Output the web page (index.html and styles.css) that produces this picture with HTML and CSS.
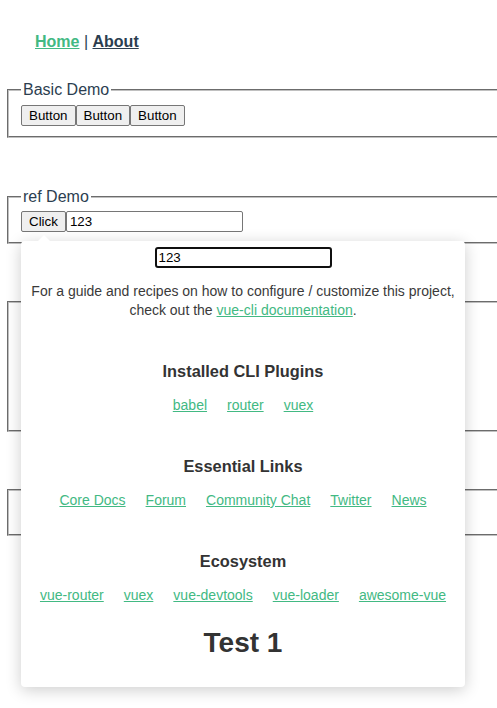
FILE: index.html
```html
<!DOCTYPE html>
<html lang="en">
<head>
<meta charset="utf-8">
<title>Demo</title>
<link rel="stylesheet" href="styles.css">
</head>
<body>
<div class="app">
  <nav class="nav"><a class="nav-link active" href="#">Home</a> | <a class="nav-link" href="#">About</a></nav>

  <fieldset class="box box-basic">
    <legend class="box-title">Basic Demo</legend>
    <div class="row"><button class="btn">Button</button><button class="btn">Button</button><button class="btn">Button</button></div>
  </fieldset>

  <fieldset class="box box-ref">
    <legend class="box-title">ref Demo</legend>
    <div class="row"><button class="btn">Click</button><input class="field" type="text" value="123"></div>
  </fieldset>

  <fieldset class="box box-third">
    <div class="filler-tall"></div>
  </fieldset>

  <fieldset class="box box-fourth">
    <div class="filler-short"></div>
  </fieldset>

  <div class="popover">
    <span class="popover-arrow"></span>
    <div class="pop-input-wrap"><input class="field field-focus" type="text" value="123"></div>
    <p class="intro">For a guide and recipes on how to configure / customize this project,<br>check out the <a class="link" href="#">vue-cli documentation</a>.</p>
    <h3 class="section-title">Installed CLI Plugins</h3>
    <ul class="links">
      <li><a class="link" href="#">babel</a></li>
      <li><a class="link" href="#">router</a></li>
      <li><a class="link" href="#">vuex</a></li>
    </ul>
    <h3 class="section-title">Essential Links</h3>
    <ul class="links">
      <li><a class="link" href="#">Core Docs</a></li>
      <li><a class="link" href="#">Forum</a></li>
      <li><a class="link" href="#">Community Chat</a></li>
      <li><a class="link" href="#">Twitter</a></li>
      <li><a class="link" href="#">News</a></li>
    </ul>
    <h3 class="section-title">Ecosystem</h3>
    <ul class="links">
      <li><a class="link" href="#">vue-router</a></li>
      <li><a class="link" href="#">vuex</a></li>
      <li><a class="link" href="#">vue-devtools</a></li>
      <li><a class="link" href="#">vue-loader</a></li>
      <li><a class="link" href="#">awesome-vue</a></li>
    </ul>
    <h1 class="big-title">Test 1</h1>
  </div>
</div>
</body>
</html>
```
FILE: styles.css
```css
html, body {
  margin: 0;
  padding: 0;
  background: #ffffff;
  overflow: hidden;
}

.app {
  position: relative;
  width: 497px;
  height: 708px;
  overflow: hidden;
  font-family: "Liberation Sans", Arial, Helvetica, sans-serif;
  color: #2c3e50;
  font-size: 16px;
}

.nav {
  padding: 33px 0 30px 35px;
  line-height: 18px;
  font-size: 16px;
}

.nav-link {
  font-weight: bold;
  color: #2c3e50;
  text-decoration: underline;
}

.nav-link.active {
  color: #42b983;
}

.box {
  width: 600px;
  margin: 0 0 0 7px;
  padding: 5.6px 12px 10px;
  border: 2px groove rgb(192, 192, 192);
  min-width: 0;
}

.box-title {
  padding: 0 2px;
  line-height: 18px;
  font-size: 16px;
}

.box-ref {
  margin-top: 50px;
}

.box-third {
  margin-top: 57px;
}

.box-fourth {
  margin-top: 57px;
}

.filler-tall {
  height: 111px;
}

.filler-short {
  height: 28px;
}

.row {
  display: flex;
  align-items: flex-start;
}

.btn {
  box-sizing: border-box;
  height: 21px;
  margin: 0;
  padding: 1px 7px;
  font-family: "Liberation Sans", Arial, sans-serif;
  font-size: 13.333px;
  color: #000000;
  background: #efefef;
  border: 1px solid #767676;
  border-radius: 2px;
}

.field {
  box-sizing: border-box;
  width: 177px;
  height: 21px;
  margin: 0;
  padding: 1px 3px;
  font-family: "Liberation Sans", Arial, sans-serif;
  font-size: 13.333px;
  color: #000000;
  background: #ffffff;
  border: 1px solid #767676;
  border-radius: 2px;
}

.field-focus {
  border: 2px solid #101010;
  border-radius: 3px;
  padding: 0 2px;
}

.popover {
  position: absolute;
  left: 21px;
  top: 241px;
  width: 444px;
  box-sizing: border-box;
  padding: 6px 0 28px;
  background: #ffffff;
  border-radius: 4px;
  box-shadow: 0 3px 16px rgba(0, 0, 0, 0.2);
  text-align: center;
  color: #333333;
  font-size: 14px;
}

.popover-arrow {
  position: absolute;
  top: -6px;
  left: 17px;
  width: 0;
  height: 0;
  border-left: 6px solid transparent;
  border-right: 6px solid transparent;
  border-bottom: 6px solid #ffffff;
}

.pop-input-wrap {
  display: flex;
  justify-content: center;
}

.intro {
  margin: 14px 0 0;
  line-height: 19px;
  color: #3a3a3a;
}

.link {
  color: #42b983;
  text-decoration: underline;
}

.section-title {
  margin: 41px 0 0;
  font-size: 16.38px;
  line-height: 20px;
  font-weight: bold;
}

.links {
  list-style: none;
  margin: 14px 0 0;
  padding: 0;
  line-height: 20px;
  display: flex;
  justify-content: center;
  gap: 20px;
}

.big-title {
  margin: 22px 0 0;
  font-size: 28px;
  line-height: 32px;
  font-weight: bold;
}
```
